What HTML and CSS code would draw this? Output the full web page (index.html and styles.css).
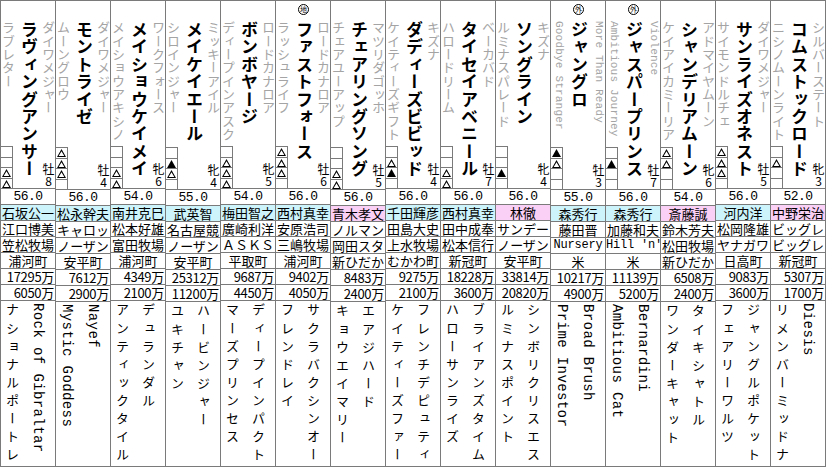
FILE: index.html
```html
<!DOCTYPE html>
<html lang="ja">
<head>
<meta charset="utf-8">
<title>出馬表</title>
<link rel="stylesheet" href="styles.css">
</head>
<body>
<div class="table">

<div class="col">
  <div class="head">
    <div class="lcol"><div class="dam">ラブレター</div><div class="marks"><i></i><i></i><i class="o"></i><i class="o"></i></div></div>
    <div class="name">ラヴィングアンサー</div>
    <div class="rcol"><div class="sire">ダイワメジャー</div><div class="sex"><span>牡</span><span>8</span></div></div>
  </div>
  <div class="r wt">56.0</div>
  <div class="r tw">石坂公一</div>
  <div class="r">江口博美</div>
  <div class="r">笠松牧場</div>
  <div class="r">浦河町</div>
  <div class="r m">17295万</div>
  <div class="r m">6050万</div>
  <div class="foot"><div class="ft">ナショナルポートレ</div><div class="ft en">Rock of Gibraltar</div></div>
</div>

<div class="col">
  <div class="head">
    <div class="lcol"><div class="dam">ムーングロウ</div><div class="marks"><i class="o"></i><i class="o"></i><i class="o"></i><i></i></div></div>
    <div class="name">モントライゼ</div>
    <div class="rcol"><div class="sire">ダイワメジャー</div><div class="sex"><span>牡</span><span>4</span></div></div>
  </div>
  <div class="r wt">56.0</div>
  <div class="r tw">松永幹夫</div>
  <div class="r">キャロッ</div>
  <div class="r">ノーザン</div>
  <div class="r">安平町</div>
  <div class="r m">7612万</div>
  <div class="r m">2900万</div>
  <div class="foot"><div class="ft en">Mystic Goddess</div><div class="ft en">Nayef</div></div>
</div>

<div class="col">
  <div class="head">
    <div class="lcol"><div class="dam">メイショウアキシノ</div><div class="marks"><i></i><i></i><i class="o"></i><i class="o"></i></div></div>
    <div class="name">メイショウケイメイ</div>
    <div class="rcol"><div class="sire">ワークフォース</div><div class="sex"><span>牝</span><span>6</span></div></div>
  </div>
  <div class="r wt">54.0</div>
  <div class="r tw">南井克巳</div>
  <div class="r">松本好雄</div>
  <div class="r">富田牧場</div>
  <div class="r">浦河町</div>
  <div class="r m">4349万</div>
  <div class="r m">2100万</div>
  <div class="foot"><div class="ft">アンティックタイル</div><div class="ft">デュランダル</div></div>
</div>

<div class="col">
  <div class="head">
    <div class="lcol"><div class="dam">シロインジャー</div><div class="marks"><i></i><i class="f"></i><i class="o"></i><i></i></div></div>
    <div class="name">メイケイエール</div>
    <div class="rcol"><div class="sire">ミッキーアイル</div><div class="sex"><span>牝</span><span>4</span></div></div>
  </div>
  <div class="r wt">55.0</div>
  <div class="r tw">武英智</div>
  <div class="r">名古屋競</div>
  <div class="r">ノーザン</div>
  <div class="r">安平町</div>
  <div class="r m">25312万</div>
  <div class="r m">11200万</div>
  <div class="foot"><div class="ft">ユキチャン</div><div class="ft">ハービンジャー</div></div>
</div>

<div class="col">
  <div class="head">
    <div class="lcol"><div class="dam">ディープインアスク</div><div class="marks"><i></i><i class="o"></i><i class="o"></i><i class="o"></i></div></div>
    <div class="name">ボンボヤージ</div>
    <div class="rcol"><div class="sire">ロードカナロア</div><div class="sex"><span>牝</span><span>5</span></div></div>
  </div>
  <div class="r wt">54.0</div>
  <div class="r tw">梅田智之</div>
  <div class="r">廣崎利洋</div>
  <div class="r">ＡＳＫＳ</div>
  <div class="r">平取町</div>
  <div class="r m">9687万</div>
  <div class="r m">4450万</div>
  <div class="foot"><div class="ft">マーズプリンセス</div><div class="ft">ディープインパクト</div></div>
</div>

<div class="col">
  <div class="head">
    <span class="badge">地</span>
    <div class="lcol"><div class="dam">ラッシュライフ</div><div class="marks"><i class="o"></i><i class="o"></i><i class="o"></i><i></i></div></div>
    <div class="name">ファストフォース</div>
    <div class="rcol"><div class="sire">ロードカナロア</div><div class="sex"><span>牡</span><span>6</span></div></div>
  </div>
  <div class="r wt">56.0</div>
  <div class="r tw">西村真幸</div>
  <div class="r">安原浩司</div>
  <div class="r">三嶋牧場</div>
  <div class="r">浦河町</div>
  <div class="r m">9402万</div>
  <div class="r m">4050万</div>
  <div class="foot"><div class="ft">フレンドレイ</div><div class="ft">サクラバクシンオー</div></div>
</div>

<div class="col">
  <div class="head">
    <div class="lcol"><div class="dam">チェアユーアップ</div><div class="marks"><i></i><i></i><i class="o"></i><i class="o"></i></div></div>
    <div class="name">チェアリングソング</div>
    <div class="rcol"><div class="sire">マツリダゴッホ</div><div class="sex"><span>牡</span><span>5</span></div></div>
  </div>
  <div class="r wt">56.0</div>
  <div class="r te">青木孝文</div>
  <div class="r">ノルマン</div>
  <div class="r">岡田スタ</div>
  <div class="r">新ひだか</div>
  <div class="r m">8483万</div>
  <div class="r m">2400万</div>
  <div class="foot"><div class="ft">キョウエイマリー</div><div class="ft">エアジハード</div></div>
</div>

<div class="col">
  <div class="head">
    <div class="lcol"><div class="dam">ケイティーズギフト</div><div class="marks"><i></i><i class="o"></i><i class="f"></i><i></i></div></div>
    <div class="name">ダディーズビビッド</div>
    <div class="rcol"><div class="sire">キズナ</div><div class="sex"><span>牡</span><span>4</span></div></div>
  </div>
  <div class="r wt">56.0</div>
  <div class="r tw">千田輝彦</div>
  <div class="r">田島大史</div>
  <div class="r">上水牧場</div>
  <div class="r">むかわ町</div>
  <div class="r m">9275万</div>
  <div class="r m">2100万</div>
  <div class="foot"><div class="ft">ケイティーズファー</div><div class="ft">フレンチデピュティ</div></div>
</div>

<div class="col">
  <div class="head">
    <div class="lcol"><div class="dam">ハロードリーム</div><div class="marks"><i></i><i></i><i class="o"></i><i class="o"></i></div></div>
    <div class="name">タイセイアベニール</div>
    <div class="rcol"><div class="sire">ベーカバド</div><div class="sex"><span>牡</span><span>7</span></div></div>
  </div>
  <div class="r wt">56.0</div>
  <div class="r tw">西村真幸</div>
  <div class="r">田中成奉</div>
  <div class="r">松本信行</div>
  <div class="r">新冠町</div>
  <div class="r m">18228万</div>
  <div class="r m">3600万</div>
  <div class="foot"><div class="ft">ハローサンライズ</div><div class="ft">ブライアンズタイム</div></div>
</div>

<div class="col">
  <div class="head">
    <div class="lcol"><div class="dam">ルミナスパレード</div><div class="marks"><i></i><i></i><i class="f"></i><i></i></div></div>
    <div class="name">ソングライン</div>
    <div class="rcol"><div class="sire">キズナ</div><div class="sex"><span>牝</span><span>4</span></div></div>
  </div>
  <div class="r wt">56.0</div>
  <div class="r te">林徹</div>
  <div class="r">サンデー</div>
  <div class="r">ノーザン</div>
  <div class="r">安平町</div>
  <div class="r m">33814万</div>
  <div class="r m">20820万</div>
  <div class="foot"><div class="ft">ルミナスポイント</div><div class="ft">シンボリクリスエス</div></div>
</div>

<div class="col">
  <div class="head">
    <span class="badge">外</span>
    <div class="lcol"><div class="dam en">Goodbye Stranger</div><div class="marks"><i class="f"></i><i class="o"></i><i></i><i></i></div></div>
    <div class="name">ジャングロ</div>
    <div class="rcol"><div class="sire en">More Than Ready</div><div class="sex"><span>牡</span><span>3</span></div></div>
  </div>
  <div class="r wt">55.0</div>
  <div class="r tw">森秀行</div>
  <div class="r">藤田晋</div>
  <div class="r hw">Nursery</div>
  <div class="r">米</div>
  <div class="r m">10217万</div>
  <div class="r m">4900万</div>
  <div class="foot"><div class="ft en">Prime Investor</div><div class="ft en">Broad Brush</div></div>
</div>

<div class="col">
  <div class="head">
    <span class="badge">外</span>
    <div class="lcol"><div class="dam en">Ambitious Journey</div><div class="marks"><i></i><i class="f"></i><i></i><i></i></div></div>
    <div class="name">ジャスパープリンス</div>
    <div class="rcol"><div class="sire en">Violence</div><div class="sex"><span>牡</span><span>7</span></div></div>
  </div>
  <div class="r wt">56.0</div>
  <div class="r tw">森秀行</div>
  <div class="r">加藤和夫</div>
  <div class="r hw">Hill 'n'</div>
  <div class="r">米</div>
  <div class="r m">11139万</div>
  <div class="r m">5200万</div>
  <div class="foot"><div class="ft en">Ambitious Cat</div><div class="ft en">Bernardini</div></div>
</div>

<div class="col">
  <div class="head">
    <div class="lcol"><div class="dam">ケイアイカミーリア</div><div class="marks"><i class="o"></i><i class="o"></i><i></i><i></i></div></div>
    <div class="name">シャンデリアムーン</div>
    <div class="rcol"><div class="sire">アドマイヤムーン</div><div class="sex"><span>牝</span><span>6</span></div></div>
  </div>
  <div class="r wt">54.0</div>
  <div class="r te">斎藤誠</div>
  <div class="r">鈴木芳夫</div>
  <div class="r">松田牧場</div>
  <div class="r">新ひだか</div>
  <div class="r m">6508万</div>
  <div class="r m">2400万</div>
  <div class="foot"><div class="ft">ワンダーキャット</div><div class="ft">タイキシャトル</div></div>
</div>

<div class="col">
  <div class="head">
    <div class="lcol"><div class="dam">サイモンドルチェ</div><div class="marks"><i class="o"></i><i class="o"></i><i class="o"></i><i></i></div></div>
    <div class="name">サンライズオネスト</div>
    <div class="rcol"><div class="sire">ダイワメジャー</div><div class="sex"><span>牡</span><span>5</span></div></div>
  </div>
  <div class="r wt">56.0</div>
  <div class="r tw">河内洋</div>
  <div class="r">松岡隆雄</div>
  <div class="r">ヤナガワ</div>
  <div class="r">日高町</div>
  <div class="r m">9083万</div>
  <div class="r m">3600万</div>
  <div class="foot"><div class="ft">フェアリーワルツ</div><div class="ft">ジャングルポケット</div></div>
</div>

<div class="col">
  <div class="head">
    <div class="lcol"><div class="dam">ニシノムーンライト</div><div class="marks"><i></i><i class="o"></i><i></i><i></i></div></div>
    <div class="name">コムストックロード</div>
    <div class="rcol"><div class="sire">シルバーステート</div><div class="sex"><span>牝</span><span>3</span></div></div>
  </div>
  <div class="r wt">52.0</div>
  <div class="r te">中野栄治</div>
  <div class="r">ビッグレ</div>
  <div class="r">ビッグレ</div>
  <div class="r">新冠町</div>
  <div class="r m">5307万</div>
  <div class="r m">1700万</div>
  <div class="foot"><div class="ft">リメンバーミッドナ</div><div class="ft en">Diesis</div></div>
</div>

</div>
</body>
</html>
```
FILE: styles.css
```css
* { box-sizing: border-box; }
html, body { margin: 0; padding: 0; background: #fff; }
body { font-family: "Noto Sans CJK JP", "DejaVu Sans", sans-serif; color: #000; }

.table {
  display: flex;
  width: 826px;
  border-left: 1px solid #7a7a7a;
  border-top: 1px solid #7a7a7a;
}
.col {
  width: 55px;
  height: 466px;
  border-right: 1px solid #7a7a7a;
  display: flex;
  flex-direction: column;
}

/* header block */
.head {
  position: relative;
  height: 189px;
  padding-top: 20px;
  border-bottom: 1px solid #7a7a7a;
  display: flex;
}
.lcol {
  width: 15px;
  display: flex;
  flex-direction: column;
  justify-content: space-between;
  align-items: center;
}
.rcol {
  width: 13px;
  display: flex;
  flex-direction: column;
  justify-content: space-between;
  align-items: center;
}
.dam, .sire {
  writing-mode: vertical-rl;
  font-size: 13px;
  line-height: 13px;
  width: 13px;
  letter-spacing: 0.3px;
  color: #a4a4a4;
  white-space: nowrap;
}
.dam.en, .sire.en {
  font-family: "Liberation Mono", monospace;
  font-size: 11px;
  letter-spacing: 0.2px;
}
.name {
  writing-mode: vertical-rl;
  width: 26px;
  line-height: 26px;
  font-size: 17px;
  font-weight: 700;
  letter-spacing: 0.4px;
  white-space: nowrap;
}
.sex {
  display: flex;
  flex-direction: column;
  align-items: center;
  width: 13px;
  padding-bottom: 1px;
}
.sex span {
  display: block;
  height: 12px;
  font-size: 12px;
  line-height: 12px;
}

/* prediction mark boxes */
.marks {
  align-self: flex-start;
  width: 12px;
  border-right: 1px solid #7a7a7a;
}
.marks i {
  display: block;
  height: 11px;
  border-top: 1px solid #7a7a7a;
  padding-top: 1px;
}
.marks i:nth-child(even) { height: 10px; }
.marks i.o::before,
.marks i.f::before {
  content: "";
  display: block;
  width: 9px;
  height: 8px;
  margin: 0 auto;
  background: #000;
}
.marks i.f::before {
  clip-path: polygon(50% 0, 100% 100%, 0 100%);
}
.marks i.o::before {
  clip-path: polygon(evenodd, 4.5px 0, 9px 8px, 0 8px, 4.5px 0, 4.5px 2.2px, 1.7px 7px, 7.3px 7px, 4.5px 2.2px);
}

.badge {
  position: absolute;
  top: 3px;
  left: 22px;
  width: 11px;
  height: 11px;
  border: 1px solid #000;
  border-radius: 50%;
  font-size: 7px;
  line-height: 9px;
  text-align: center;
}

/* data rows */
.r {
  height: 16px;
  border-bottom: 1px solid #7a7a7a;
  font-size: 13px;
  line-height: 15px;
  text-align: center;
  white-space: nowrap;
}
.wt {
  font-family: "Liberation Mono", monospace;
  font-size: 13px;
  letter-spacing: -0.6px;
}
.tw { background: #cdf3fb; }
.te { background: #fbd0f6; }
.hw {
  font-family: "Liberation Mono", monospace;
  font-size: 12px;
  letter-spacing: -0.2px;
}
.m {
  text-align: right;
  padding-right: 1px;
  letter-spacing: -0.3px;
}

/* pedigree block */
.foot {
  flex: 1;
  display: flex;
  gap: 10px;
  padding: 1px 0 0 3px;
  border-bottom: 1px solid #7a7a7a;
}
.ft {
  writing-mode: vertical-rl;
  width: 16px;
  line-height: 16px;
  font-size: 13px;
  letter-spacing: 5.1px;
  padding-top: 1px;
  white-space: nowrap;
}
.ft.en {
  font-family: "Liberation Mono", monospace;
  font-size: 14px;
  letter-spacing: 0.4px;
}
```
